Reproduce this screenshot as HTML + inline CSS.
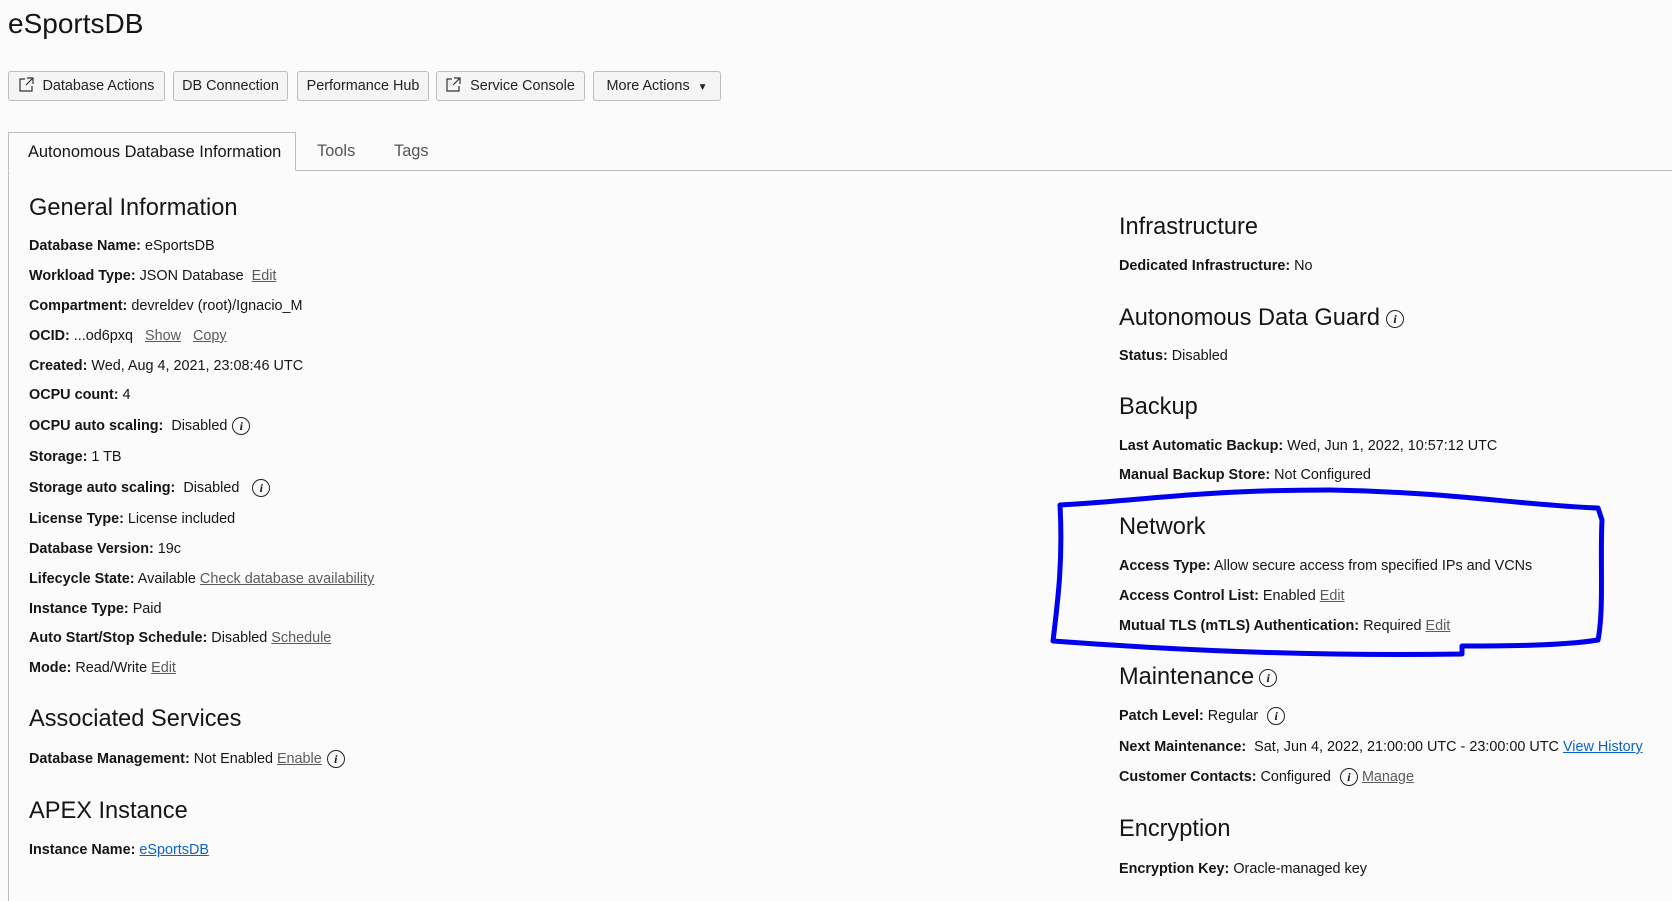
<!DOCTYPE html>
<html><head><meta charset="utf-8"><style>
body{margin:0;width:1672px;height:901px;background:#fbfbfb;font-family:"Liberation Sans",sans-serif;color:#161513;position:relative;overflow:hidden}
.a{position:absolute;white-space:nowrap}
.r{position:absolute;white-space:nowrap;font-size:14.4px;line-height:20px;margin-top:1px}
.r b{font-weight:bold}
.h{position:absolute;white-space:nowrap;font-size:23.6px;line-height:28px;color:#161513;margin-top:1px}
.l{color:#5b5b5b;text-decoration:underline}
.bl{color:#0b63c7;text-decoration:underline}
.i{display:inline-block;width:18px;height:18px;border:1.3px solid #222;border-radius:50%;font:italic bold 12px/16px "Liberation Serif",serif;text-align:center;vertical-align:middle;margin-left:5px;box-sizing:border-box}
.btn{position:absolute;top:71px;height:30px;border:1px solid #bdbdbd;border-radius:3px;background:#f5f5f5;font-size:14.4px;line-height:28px;box-sizing:border-box;text-align:center;color:#222}
.ext{display:inline-block;width:15px;height:15px;margin-right:9px;vertical-align:-2px}
</style></head><body>
<div class="a" style="left:8px;top:7px;font-size:28px;line-height:34px">eSportsDB</div>
<div class="btn" style="left:8px;width:157px"><svg class="ext" viewBox="0 0 15 15"><path d="M6 2H1V14H13V9M8 1H14V7M14 1L7 8" fill="none" stroke="#333" stroke-width="1.2"/></svg>Database Actions</div>
<div class="btn" style="left:173px;width:115px">DB Connection</div>
<div class="btn" style="left:297px;width:132px">Performance Hub</div>
<div class="btn" style="left:436px;width:149px"><svg class="ext" viewBox="0 0 15 15"><path d="M6 2H1V14H13V9M8 1H14V7M14 1L7 8" fill="none" stroke="#333" stroke-width="1.2"/></svg>Service Console</div>
<div class="btn" style="left:593px;width:128px">More Actions &nbsp;<span style="font-size:10px">▼</span></div>
<div class="a" style="left:8px;top:170px;width:1664px;height:1px;background:#bcbcbc"></div>
<div class="a" style="left:8px;top:132px;width:288px;height:39px;border:1px solid #bcbcbc;border-bottom:1px solid #fbfbfb;box-sizing:border-box;background:#fbfbfb"></div>
<div class="a" style="left:28px;top:142px;font-size:16.4px;line-height:20px">Autonomous Database Information</div>
<div class="a" style="left:317px;top:141px;font-size:16.4px;line-height:20px;color:#555">Tools</div>
<div class="a" style="left:394px;top:141px;font-size:16.4px;line-height:20px;color:#555">Tags</div>
<div class="a" style="left:8px;top:171px;width:1px;height:730px;background:#bcbcbc"></div>

<div class="h" style="left:29px;top:193px">General Information</div>
<div class="r" style="left:29px;top:235px"><b>Database Name:</b> eSportsDB</div>
<div class="r" style="left:29px;top:265px"><b>Workload Type:</b> JSON Database &nbsp;<span class="l">Edit</span></div>
<div class="r" style="left:29px;top:295px"><b>Compartment:</b> devreldev (root)/Ignacio_M</div>
<div class="r" style="left:29px;top:325px"><b>OCID:</b> ...od6pxq &nbsp; <span class="l">Show</span> &nbsp; <span class="l">Copy</span></div>
<div class="r" style="left:29px;top:355px"><b>Created:</b> Wed, Aug 4, 2021, 23:08:46 UTC</div>
<div class="r" style="left:29px;top:384px"><b>OCPU count:</b> 4</div>
<div class="r" style="left:29px;top:415px"><b>OCPU auto scaling:</b> &nbsp;Disabled<span class="i">i</span></div>
<div class="r" style="left:29px;top:446px"><b>Storage:</b> 1 TB</div>
<div class="r" style="left:29px;top:477px"><b>Storage auto scaling:</b> &nbsp;Disabled &nbsp;<span class="i">i</span></div>
<div class="r" style="left:29px;top:508px"><b>License Type:</b> License included</div>
<div class="r" style="left:29px;top:538px"><b>Database Version:</b> 19c</div>
<div class="r" style="left:29px;top:568px"><b>Lifecycle State:</b> Available <span class="l">Check database availability</span></div>
<div class="r" style="left:29px;top:598px"><b>Instance Type:</b> Paid</div>
<div class="r" style="left:29px;top:627px"><b>Auto Start/Stop Schedule:</b> Disabled <span class="l">Schedule</span></div>
<div class="r" style="left:29px;top:657px"><b>Mode:</b> Read/Write <span class="l">Edit</span></div>
<div class="h" style="left:29px;top:704px">Associated Services</div>
<div class="r" style="left:29px;top:748px"><b>Database Management:</b> Not Enabled <span class="l">Enable</span><span class="i">i</span></div>
<div class="h" style="left:29px;top:796px">APEX Instance</div>
<div class="r" style="left:29px;top:839px"><b>Instance Name:</b> <span class="bl">eSportsDB</span></div>

<div class="h" style="left:1119px;top:212px">Infrastructure</div>
<div class="r" style="left:1119px;top:255px"><b>Dedicated Infrastructure:</b> No</div>
<div class="h" style="left:1119px;top:303px">Autonomous Data Guard<span class="i" style="margin-left:6px">i</span></div>
<div class="r" style="left:1119px;top:345px"><b>Status:</b> Disabled</div>
<div class="h" style="left:1119px;top:392px">Backup</div>
<div class="r" style="left:1119px;top:435px"><b>Last Automatic Backup:</b> Wed, Jun 1, 2022, 10:57:12 UTC</div>
<div class="r" style="left:1119px;top:464px"><b>Manual Backup Store:</b> Not Configured</div>
<div class="h" style="left:1119px;top:512px">Network</div>
<div class="r" style="left:1119px;top:555px"><b>Access Type:</b> Allow secure access from specified IPs and VCNs</div>
<div class="r" style="left:1119px;top:585px"><b>Access Control List:</b> Enabled <span class="l">Edit</span></div>
<div class="r" style="left:1119px;top:615px"><b>Mutual TLS (mTLS) Authentication:</b> Required <span class="l">Edit</span></div>
<div class="h" style="left:1119px;top:662px">Maintenance<span class="i">i</span></div>
<div class="r" style="left:1119px;top:705px"><b>Patch Level:</b> Regular <span class="i">i</span></div>
<div class="r" style="left:1119px;top:736px"><b>Next Maintenance:</b> &nbsp;Sat, Jun 4, 2022, 21:00:00 UTC - 23:00:00 UTC <span class="bl">View History</span></div>
<div class="r" style="left:1119px;top:766px"><b>Customer Contacts:</b> Configured <span class="i">i</span> <span class="l">Manage</span></div>
<div class="h" style="left:1119px;top:814px">Encryption</div>
<div class="r" style="left:1119px;top:858px"><b>Encryption Key:</b> Oracle-managed key</div>

<svg class="a" style="left:0;top:0" width="1672" height="901"><path d="M1060 505 C1150 500 1200 490 1330 490 C1450 492 1520 505 1598 508 L1602 520 C1600 560 1604 610 1598 640 C1560 646 1500 646 1462 646 L1462 654 C1340 656 1200 652 1053 641 C1058 600 1063 560 1060 505 Z" fill="none" stroke="#0000ee" stroke-width="5" stroke-linejoin="round"/></svg>
</body></html>
